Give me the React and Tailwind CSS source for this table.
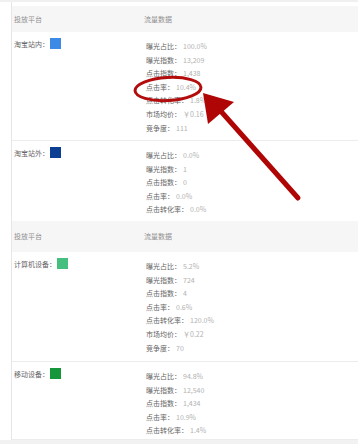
const font = { fontFamily: '"Noto Sans CJK SC", "Noto Sans", sans-serif' };

const groups = [
  {
    rows: [
      {
        name: "淘宝站内：",
        color: "bg-[#3d8ae6]",
        h: "h-[109px]",
        data: [
          ["曝光占比：", "100.0%"],
          ["曝光指数：", "13,209"],
          ["点击指数：", "1,438"],
          ["点击率：", "10.4%"],
          ["点击转化率：", "1.8%"],
          ["市场均价：", "￥0.16"],
          ["竞争度：", "111"],
        ],
      },
      {
        name: "淘宝站外：",
        color: "bg-[#0c3f94]",
        h: "h-[80px]",
        data: [
          ["曝光占比：", "0.0%"],
          ["曝光指数：", "1"],
          ["点击指数：", "0"],
          ["点击率：", "0.0%"],
          ["点击转化率：", "0.0%"],
        ],
      },
    ],
  },
  {
    rows: [
      {
        name: "计算机设备：",
        color: "bg-[#45bf7e]",
        h: "h-[110px]",
        data: [
          ["曝光占比：", "5.2%"],
          ["曝光指数：", "724"],
          ["点击指数：", "4"],
          ["点击率：", "0.6%"],
          ["点击转化率：", "120.0%"],
          ["市场均价：", "￥0.22"],
          ["竞争度：", "70"],
        ],
      },
      {
        name: "移动设备：",
        color: "bg-[#14973a]",
        h: "h-[78px]",
        data: [
          ["曝光占比：", "94.8%"],
          ["曝光指数：", "12,540"],
          ["点击指数：", "1,434"],
          ["点击率：", "10.9%"],
          ["点击转化率：", "1.4%"],
        ],
      },
    ],
  },
];

function Header({ h }) {
  return (
    <div className={`flex items-center bg-[#f6f6f6] text-[7px] text-[#909090] ${h}`}>
      <div className="w-[132px] pl-[2px]">投放平台</div>
      <div>流量数据</div>
    </div>
  );
}

function Row({ row, last }) {
  return (
    <div className={`flex ${row.h} ${last ? "" : "border-b border-[#ececec]"}`}>
      <div className="w-[132px] pl-[2px] pt-[6px] flex items-start gap-[1px]">
        <span className="text-[7px] leading-[12px] text-[#666]">{row.name}</span>
        <span className={`w-[11px] h-[11px] ${row.color}`} />
      </div>
      <div className="pl-[2px] pt-[8px] text-[7px] leading-[13.6px]">
        {row.data.map(([k, v]) => (
          <div key={k} className="flex gap-[2px]">
            <span className="text-[#666]">{k}</span>
            <span className="text-[#b2b2b2]">{v}</span>
          </div>
        ))}
      </div>
    </div>
  );
}

export default function App() {
  return (
    <div className="relative w-[358px] h-[444px] bg-white overflow-hidden" style={font}>
      <div className="h-[2px] bg-[#f0f0f0]" />
      <div className="ml-[11px] border-l border-[#e6e6e6] pt-[4px]">
        <Header h="h-[26px]" />
        {groups[0].rows.map((r, i) => (
          <Row key={r.name} row={r} last={i === 1} />
        ))}
        <Header h="h-[31px]" />
        {groups[1].rows.map((r) => (
          <Row key={r.name} row={r} />
        ))}
      </div>
      <div className="h-[6px] bg-[#f2f2f2]" />

      <svg className="absolute left-0 top-0 pointer-events-none" width="358" height="444">
        <ellipse cx="168" cy="89" rx="33" ry="11.5" fill="none" stroke="#b30c0c" strokeWidth="3" transform="rotate(-3 168 89)" />
        <line x1="298" y1="198" x2="218" y2="108" stroke="#b00505" strokeWidth="5" strokeLinecap="round" />
        <polygon points="203,93 234,102 208,124" fill="#b00505" />
      </svg>
    </div>
  );
}
